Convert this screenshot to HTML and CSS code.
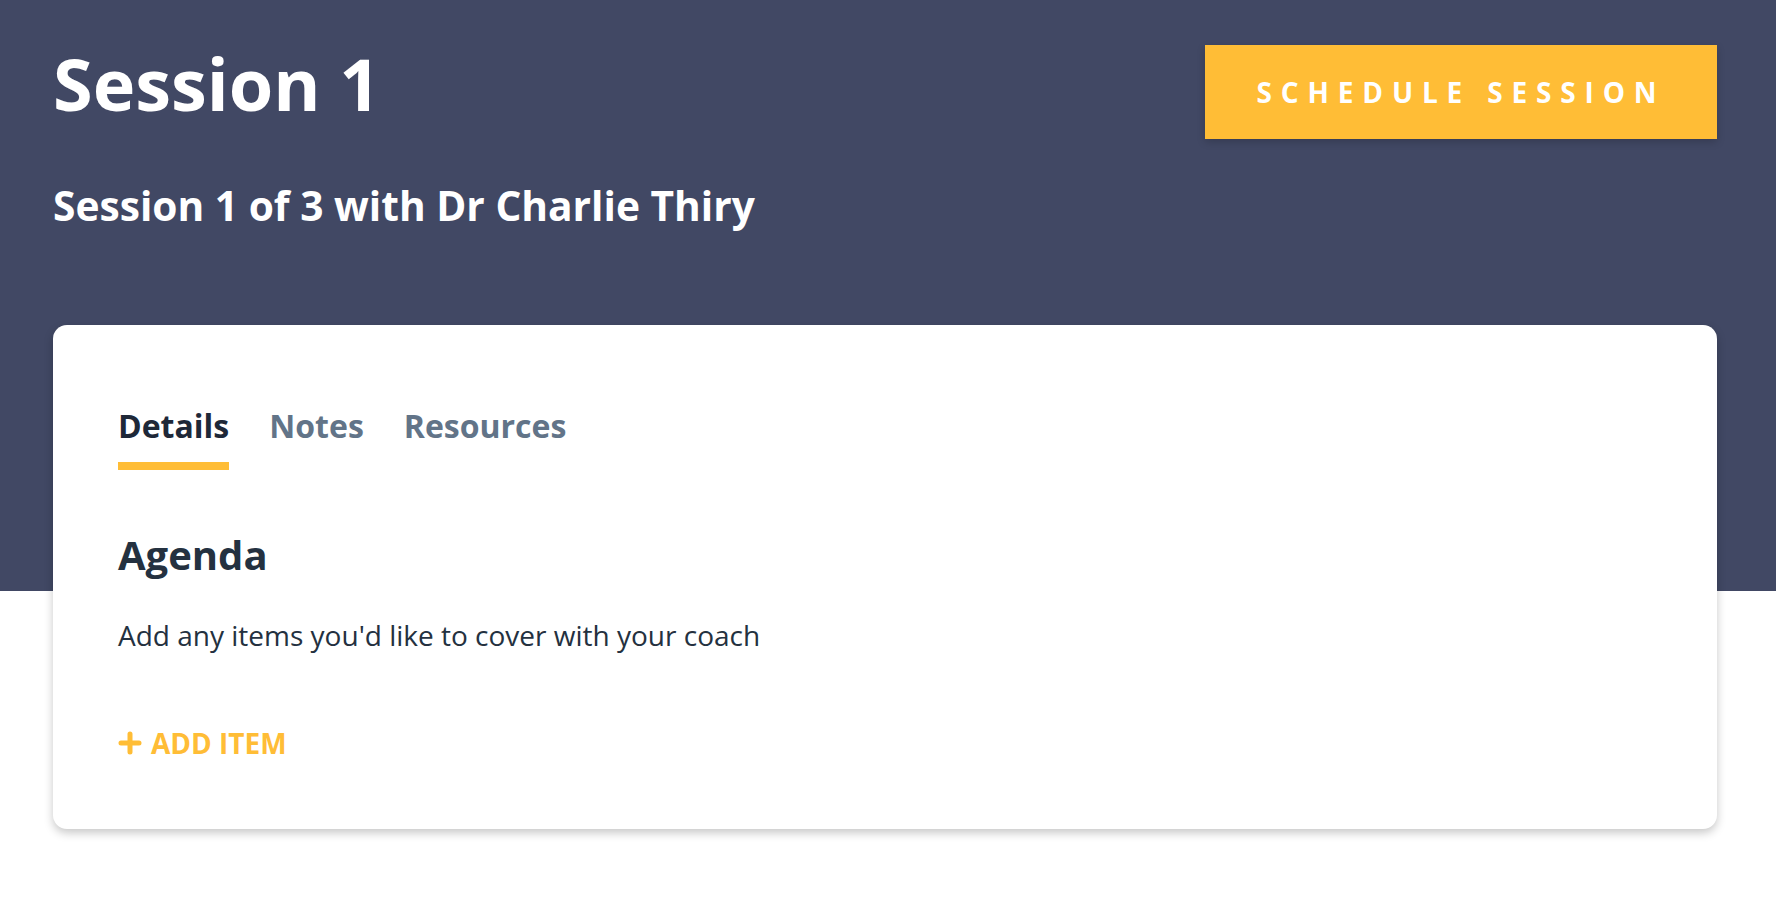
FILE: index.html
```html
<!DOCTYPE html>
<html lang="en">
<head>
<meta charset="utf-8">
<title>Session 1</title>
<link rel="stylesheet" href="styles.css">
</head>
<body>
<div class="page">
  <header class="header">
    <div class="header-row">
      <h1 class="title">Session 1</h1>
      <button class="schedule-btn" type="button">SCHEDULE SESSION</button>
    </div>
    <h2 class="subtitle">Session 1 of 3 with Dr Charlie Thiry</h2>
  </header>
  <main class="card">
    <nav class="tabs">
      <a class="tab active">Details</a>
      <a class="tab">Notes</a>
      <a class="tab">Resources</a>
    </nav>
    <section class="agenda">
      <h3 class="agenda-title">Agenda</h3>
      <p class="agenda-text">Add any items you'd like to cover with your coach</p>
      <a class="add-item">
        <svg class="plus" viewBox="0 0 24 24" width="24" height="24" aria-hidden="true">
          <path d="M12 3v18M3 12h18" stroke="currentColor" stroke-width="5" stroke-linecap="round" fill="none"/>
        </svg>
        <span>ADD ITEM</span>
      </a>
    </section>
  </main>
</div>
</body>
</html>
```
FILE: styles.css
```css
* { box-sizing: border-box; }
html, body { margin: 0; padding: 0; }
body {
  font-family: "Open Sans", "Noto Sans", sans-serif;
  background: #ffffff;
}
.page {
  min-height: 900px;
  padding: 40px 59px 60px 53px;
  background: linear-gradient(to bottom, #414864 0, #414864 591px, #ffffff 591px);
}
.header-row {
  display: flex;
  justify-content: space-between;
  align-items: flex-start;
}
.title {
  margin: 0;
  font-size: 72px;
  line-height: 86px;
  font-weight: 700;
  color: #ffffff;
}
.schedule-btn {
  margin-top: 5px;
  width: 512px;
  height: 94px;
  padding: 0;
  border: none;
  background: #ffbd36;
  color: #ffffff;
  font-family: inherit;
  font-size: 28px;
  font-weight: 700;
  letter-spacing: 8.85px;
  box-shadow: 0 3px 8px rgba(0, 0, 0, 0.18);
  cursor: pointer;
}
.subtitle {
  margin: 42px 0 0 0;
  font-size: 40.7px;
  line-height: 49px;
  font-weight: 700;
  color: #ffffff;
}
.card {
  margin-top: 95px;
  background: #ffffff;
  border-radius: 14px;
  box-shadow: 0 4px 10px rgba(0, 0, 0, 0.22);
  padding: 82px 64px 69px 65px;
}
.tabs {
  display: flex;
  gap: 40px;
}
.tab {
  font-size: 32px;
  line-height: 38px;
  font-weight: 700;
  color: #627488;
  padding-bottom: 17px;
  border-bottom: 8px solid transparent;
}
.tab.active {
  color: #1e2838;
  border-bottom-color: #ffbd36;
}
.agenda-title {
  margin: 61px 0 0 0;
  font-size: 40px;
  line-height: 48px;
  font-weight: 700;
  color: #243140;
}
.agenda-text {
  margin: 35px 0 0 0;
  font-size: 28px;
  line-height: 42px;
  font-weight: 400;
  color: #243140;
}
.add-item {
  margin-top: 70px;
  display: flex;
  align-items: center;
  gap: 9px;
  font-size: 28px;
  line-height: 34px;
  font-weight: 700;
  color: #ffbd36;
}
.plus {
  display: block;
  flex: none;
}
```
